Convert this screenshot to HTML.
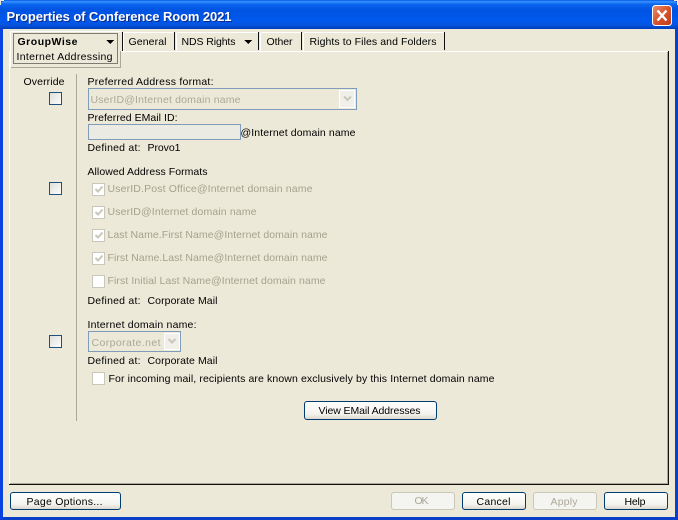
<!DOCTYPE html>
<html><head><meta charset="utf-8"><title>Properties of Conference Room 2021</title>
<style>
html,body{margin:0;padding:0;background:#ECE9D8}
svg{display:block}
text{font-family:"Liberation Sans",Arial,sans-serif;font-size:10.5px;fill:#000;white-space:pre;transform:translateX(-.5px)}
.g{fill:#ACA899}
.d{fill:#A5A28F}
.b{font-weight:bold}
.r{shape-rendering:crispEdges}
</style></head><body>
<svg width="678" height="520" viewBox="0 0 678 520" xmlns="http://www.w3.org/2000/svg">
<defs>
<linearGradient id="tb" x1="0" y1="0" x2="0" y2="1">
<stop offset="0" stop-color="#0058E6"/><stop offset=".06" stop-color="#3A93FF"/><stop offset=".14" stop-color="#0A66EE"/><stop offset=".35" stop-color="#0053E1"/><stop offset=".7" stop-color="#0058EE"/><stop offset=".88" stop-color="#0553DD"/><stop offset="1" stop-color="#003DB8"/>
</linearGradient>
<linearGradient id="btn" x1="0" y1="0" x2="0" y2="1"><stop offset="0" stop-color="#fff"/><stop offset=".7" stop-color="#F4F3EE"/><stop offset="1" stop-color="#D9D5C8"/></linearGradient>
<linearGradient id="cb" x1="0" y1="0" x2="1" y2="1"><stop offset="0" stop-color="#DCDCD7"/><stop offset="1" stop-color="#FFFFFF"/></linearGradient>
<linearGradient id="cls" x1="0" y1="0" x2="1" y2="1"><stop offset="0" stop-color="#E8906F"/><stop offset=".5" stop-color="#D9542B"/><stop offset="1" stop-color="#BE3A16"/></linearGradient>
</defs>
<rect width="678" height="520" fill="#0A3FC8" class="r"/>
<path d="M0 29V7Q0 0 7 0H671Q678 0 678 7V29Z" fill="url(#tb)"/>
<rect x="0" y="0" width="1" height="5" fill="#ECE9D8" class="r"/><rect x="0" y="0" width="4" height="1" fill="#ECE9D8" class="r"/>
<rect x="677" y="0" width="1" height="5" fill="#ECE9D8" class="r"/><rect x="674" y="0" width="4" height="1" fill="#ECE9D8" class="r"/>
<rect x="0" y="29" width="3" height="491" fill="#0842E0" class="r"/>
<rect x="3" y="29" width="672" height="488" fill="#ECE9D8" class="r"/>
<text x="8" y="22" class="b" style="font-size:13px;fill:#0A2A90" textLength="225" lengthAdjust="spacing">Properties of Conference Room 2021</text>
<text x="7" y="21" class="b" style="font-size:13px;fill:#fff" textLength="225" lengthAdjust="spacing">Properties of Conference Room 2021</text>
<rect x="652.500" y="5.500" width="19" height="20" rx="3" fill="url(#cls)" stroke="#fff"/>
<path d="M657.500 10.500L666.500 20.500M666.500 10.500L657.500 20.500" stroke="#fff" stroke-width="2.400" fill="none"/>

<rect x="9" y="51" width="660" height="1" fill="#fff" class="r"/>
<rect x="9" y="51" width="1" height="434" fill="#fff" class="r"/>
<rect x="668" y="51" width="1" height="434" fill="#111" class="r"/>
<rect x="667" y="52" width="1" height="432" fill="#ACA899" class="r"/>
<rect x="9" y="484" width="660" height="1" fill="#111" class="r"/>
<rect x="10" y="483" width="658" height="1" fill="#ACA899" class="r"/>

<rect x="10" y="31" width="111" height="37" fill="#ECE9D8" class="r"/>
<rect x="10" y="31" width="111" height="1" fill="#fff" class="r"/>
<rect x="10" y="31" width="1" height="37" fill="#fff" class="r"/>
<rect x="120" y="51" width="1" height="16" fill="#ACA899" class="r"/>
<rect x="11" y="67" width="110" height="1" fill="#ACA899" class="r"/>
<rect x="13.500" y="33.500" width="104" height="30" fill="none" stroke="#111" stroke-dasharray="1 1" class="r"/>
<text x="18" y="45" class="b" textLength="60" lengthAdjust="spacing">GroupWise</text>
<path d="M106 40h8l-4 4z" fill="#000" class="r"/>
<text x="17" y="60" textLength="96" lengthAdjust="spacing">Internet Addressing</text>

<rect x="122" y="32" width="1" height="19" fill="#111" class="r"/>
<rect x="124" y="32" width="50" height="1" fill="#fff" class="r"/><rect x="123" y="33" width="1" height="18" fill="#fff" class="r"/>
<rect x="174" y="32" width="1" height="18" fill="#111" class="r"/>
<text x="129" y="45" textLength="38" lengthAdjust="spacing">General</text>
<rect x="177" y="32" width="81" height="1" fill="#fff" class="r"/><rect x="176" y="33" width="1" height="18" fill="#fff" class="r"/>
<rect x="258" y="32" width="1" height="18" fill="#111" class="r"/>
<text x="182" y="45" textLength="54" lengthAdjust="spacing">NDS Rights</text>
<path d="M244 40h8l-4 4z" fill="#000" class="r"/>
<rect x="261" y="32" width="40" height="1" fill="#fff" class="r"/><rect x="260" y="33" width="1" height="18" fill="#fff" class="r"/>
<rect x="301" y="32" width="1" height="18" fill="#111" class="r"/>
<text x="267" y="45" textLength="26" lengthAdjust="spacing">Other</text>
<rect x="304" y="32" width="140" height="1" fill="#fff" class="r"/><rect x="303" y="33" width="1" height="18" fill="#fff" class="r"/>
<rect x="444" y="32" width="1" height="18" fill="#111" class="r"/>
<text x="310" y="45" textLength="127" lengthAdjust="spacing">Rights to Files and Folders</text>

<text x="24" y="85" textLength="41" lengthAdjust="spacing">Override</text>
<rect x="76" y="74" width="1" height="347" fill="#ACA899" class="r"/>
<rect x="49.500" y="92.500" width="12" height="12" fill="url(#cb)" stroke="#1C5180" class="r"/>
<rect x="49.500" y="182.500" width="12" height="12" fill="url(#cb)" stroke="#1C5180" class="r"/>
<rect x="49.500" y="335.500" width="12" height="12" fill="url(#cb)" stroke="#1C5180" class="r"/>

<text x="88" y="85" textLength="126" lengthAdjust="spacing">Preferred Address format:</text>
<rect x="88.500" y="88.500" width="268" height="21" fill="#ECE9D8" stroke="#7F9DB9" class="r"/>
<text x="91" y="103" class="g" textLength="150" lengthAdjust="spacing">UserID@Internet domain name</text>
<rect x="339.500" y="90.500" width="15" height="17" fill="#F0EFE9" stroke="#FFFFFF" class="r"/>
<path d="M344 96.500l3.500 3.500 3.500-3.500" fill="none" stroke="#C9C7BA" stroke-width="2"/>

<text x="88" y="121" textLength="90" lengthAdjust="spacing">Preferred EMail ID:</text>
<rect x="88.500" y="124.500" width="152" height="15" fill="#EBEAE3" stroke="#7F9DB9" class="r"/>
<text x="241" y="136" textLength="115" lengthAdjust="spacing">@Internet domain name</text>
<text x="88" y="151" textLength="53" lengthAdjust="spacing">Defined at:</text>
<text x="148" y="151" textLength="33" lengthAdjust="spacing">Provo1</text>

<text x="88" y="175" textLength="120" lengthAdjust="spacing">Allowed Address Formats</text>

<rect x="92.500" y="183.500" width="12" height="12" fill="#fff" stroke="#C9C7BA" class="r"/>
<path d="M95.500 189l2.500 2.500 4.500-5" fill="none" stroke="#C9C7BA" stroke-width="2"/>
<text x="108" y="192" class="d" textLength="205" lengthAdjust="spacing">UserID.Post Office@Internet domain name</text>
<rect x="92.500" y="206.500" width="12" height="12" fill="#fff" stroke="#C9C7BA" class="r"/>
<path d="M95.500 212l2.500 2.500 4.500-5" fill="none" stroke="#C9C7BA" stroke-width="2"/>
<text x="108" y="215" class="d" textLength="149" lengthAdjust="spacing">UserID@Internet domain name</text>
<rect x="92.500" y="229.500" width="12" height="12" fill="#fff" stroke="#C9C7BA" class="r"/>
<path d="M95.500 235l2.500 2.500 4.500-5" fill="none" stroke="#C9C7BA" stroke-width="2"/>
<text x="108" y="238" class="d" textLength="220" lengthAdjust="spacing">Last Name.First Name@Internet domain name</text>
<rect x="92.500" y="252.500" width="12" height="12" fill="#fff" stroke="#C9C7BA" class="r"/>
<path d="M95.500 258l2.500 2.500 4.500-5" fill="none" stroke="#C9C7BA" stroke-width="2"/>
<text x="108" y="261" class="d" textLength="220" lengthAdjust="spacing">First Name.Last Name@Internet domain name</text>
<rect x="92.500" y="275.500" width="12" height="12" fill="#fff" stroke="#C9C7BA" class="r"/>
<text x="108" y="284" class="d" textLength="218" lengthAdjust="spacing">First Initial Last Name@Internet domain name</text>

<text x="88" y="304" textLength="53" lengthAdjust="spacing">Defined at:</text>
<text x="148" y="304" textLength="70" lengthAdjust="spacing">Corporate Mail</text>

<text x="88" y="328" textLength="109" lengthAdjust="spacing">Internet domain name:</text>
<rect x="88.500" y="331.500" width="92" height="20" fill="#ECE9D8" stroke="#7F9DB9" class="r"/>
<text x="92" y="346" class="g" textLength="69" lengthAdjust="spacing">Corporate.net</text>
<rect x="164.500" y="333.500" width="15" height="16" fill="#F0EFE9" stroke="#FFFFFF" class="r"/>
<path d="M168.500 339l3.500 3.500 3.500-3.500" fill="none" stroke="#C9C7BA" stroke-width="2"/>
<text x="88" y="364" textLength="53" lengthAdjust="spacing">Defined at:</text>
<text x="148" y="364" textLength="70" lengthAdjust="spacing">Corporate Mail</text>

<rect x="92.500" y="372.500" width="12" height="12" fill="#fff" stroke="#C9C7BA" class="r"/>
<text x="109" y="382" textLength="386" lengthAdjust="spacing">For incoming mail, recipients are known exclusively by this Internet domain name</text>

<rect x="304.500" y="401.500" width="132" height="18" rx="2.500" fill="url(#btn)" stroke="#003C74"/>
<text x="319" y="414" textLength="102" lengthAdjust="spacing">View EMail Addresses</text>

<rect x="10.500" y="492.500" width="110" height="17" rx="2.500" fill="url(#btn)" stroke="#003C74"/>
<text x="27" y="505" textLength="76" lengthAdjust="spacing">Page Options...</text>

<rect x="391.500" y="492.500" width="63" height="17" rx="2.500" fill="#F4F4F0" stroke="#C9C7BA"/>
<text x="415" y="504" class="g" textLength="14" lengthAdjust="spacing">OK</text>
<rect x="462.500" y="492.500" width="63" height="17" rx="2.500" fill="url(#btn)" stroke="#003C74"/>
<text x="477" y="505" textLength="34" lengthAdjust="spacing">Cancel</text>
<rect x="533.500" y="492.500" width="63" height="17" rx="2.500" fill="#F4F4F0" stroke="#C9C7BA"/>
<text x="551" y="505" class="g" textLength="27" lengthAdjust="spacing">Apply</text>
<rect x="604.500" y="492.500" width="63" height="17" rx="2.500" fill="url(#btn)" stroke="#003C74"/>
<text x="625" y="505" textLength="21" lengthAdjust="spacing">Help</text>
</svg>
</body></html>
